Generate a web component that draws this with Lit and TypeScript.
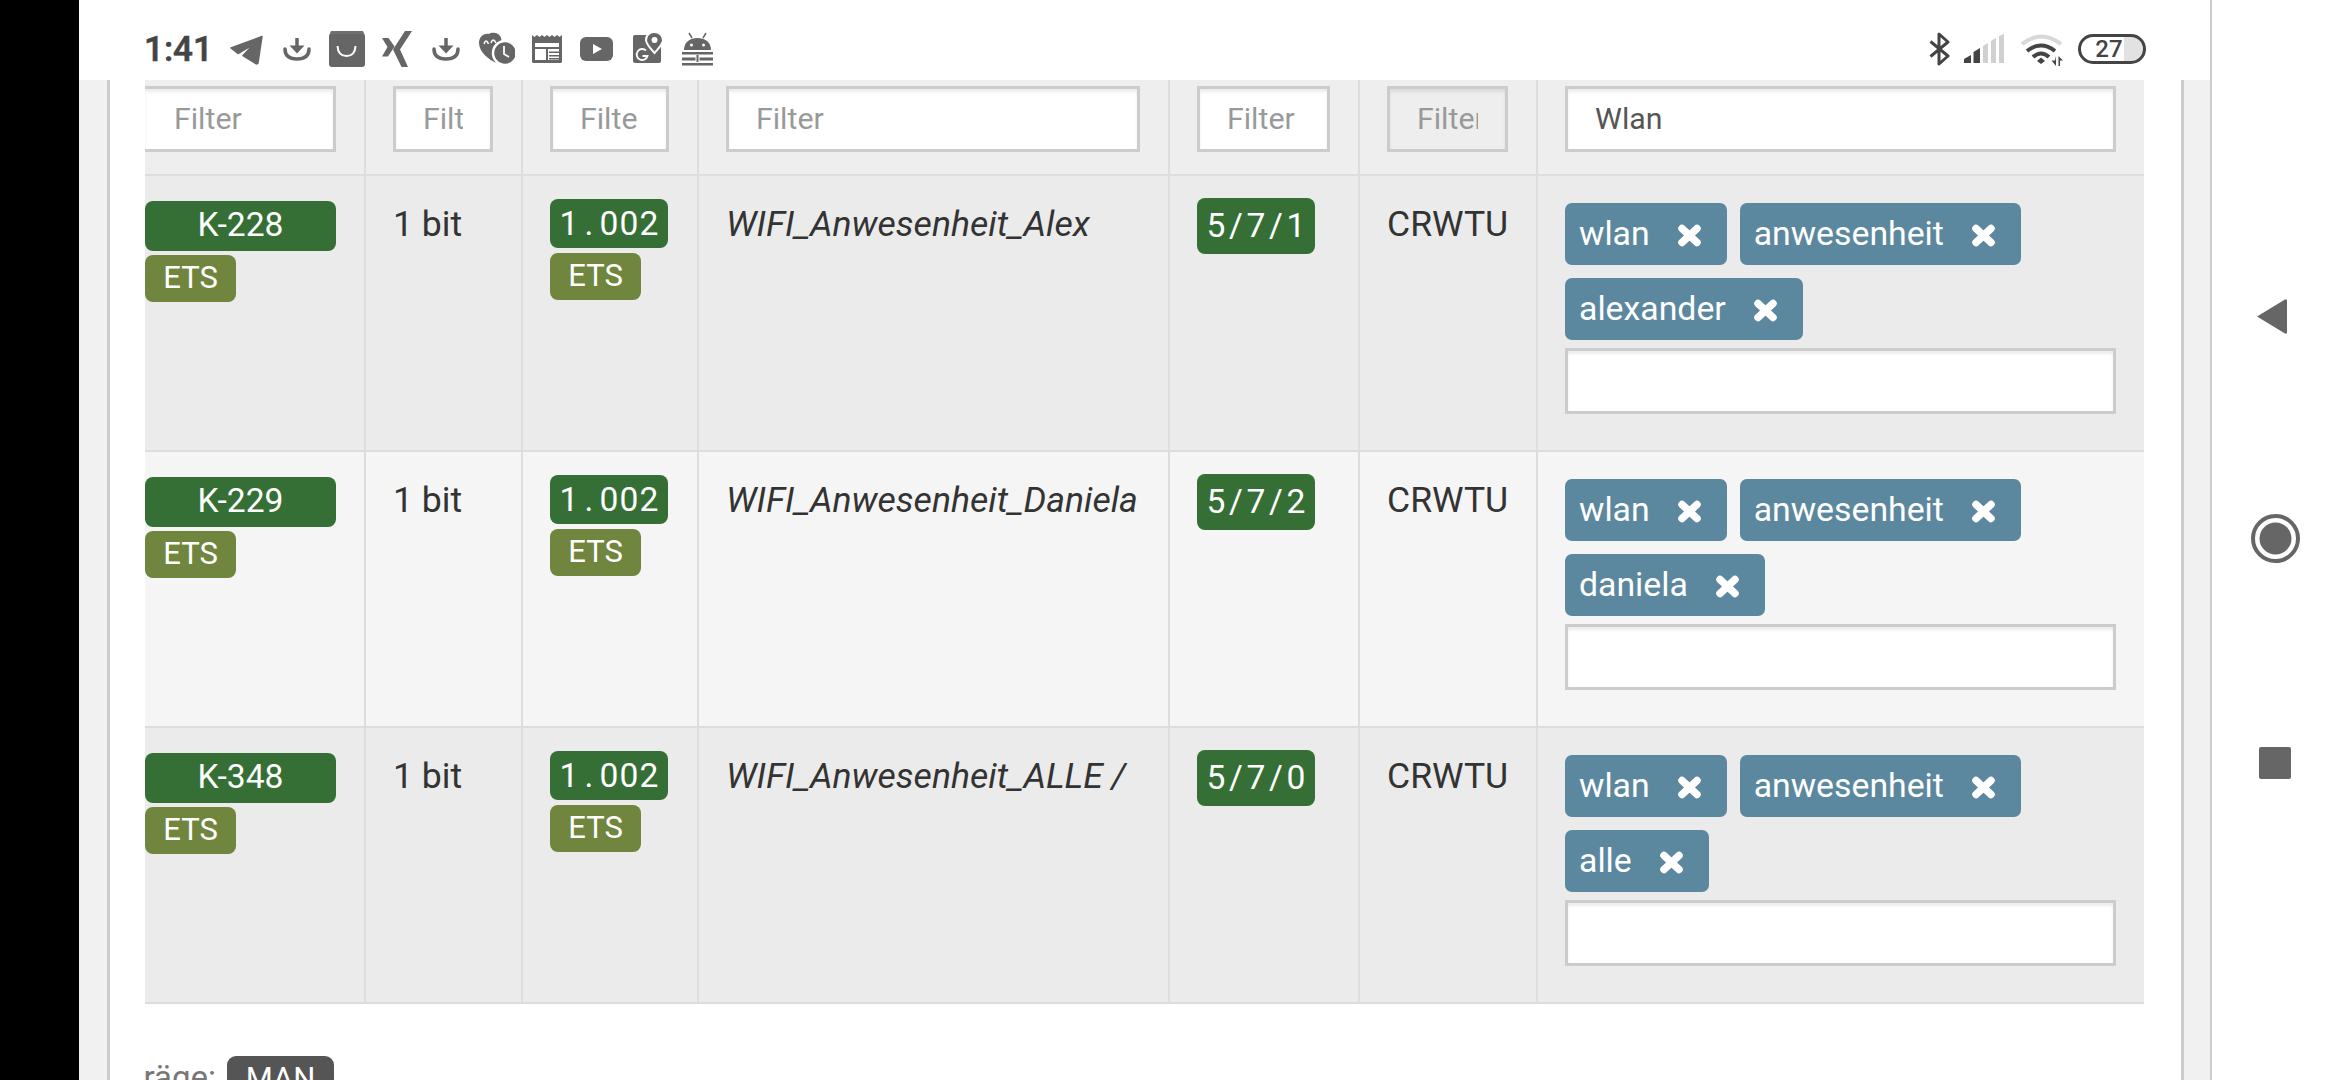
import { LitElement, html, css, svg } from "lit";
import { customElement } from "lit/decorators.js";

const G = "#666";
const leftIcons = [
  svg`<svg width="37" height="40" viewBox="227 30 37 40"><path fill="${G}" d="M231 48 262 36.500 258 63 Q257 64.500 255.500 63.500L243 55.500 254 44 238 53.500Z" stroke="${G}" stroke-width="1.500" stroke-linejoin="round"/></svg>`,
  svg`<svg width="31" height="40" viewBox="281 30 31 40"><g fill="none" stroke="${G}" stroke-width="3.500"><path d="M285 49Q285 59 297 59Q309 59 309 49" stroke-linecap="round"/><path d="M297 38V50"/></g><path fill="${G}" d="M289.500 45.500H304.500L297 53.500Z"/></svg>`,
  svg`<svg width="36" height="40" viewBox="329 30 36 40"><path fill="#707070" d="M331 31H363L365 36H329Z"/><rect x="329" y="34" width="36" height="33" rx="3" fill="${G}"/><path d="M337.500 46Q338 56 346.500 56Q355 56 355.500 46" fill="none" stroke="#fff" stroke-width="2"/></svg>`,
  svg`<svg width="30" height="40" viewBox="382 30 30 40"><path fill="${G}" d="M382 38H388.500L394.500 46.500 388 56.500H382L387.500 47ZM405 31H412L400 49.500 408 67H401.500L393 49.500Z"/></svg>`,
  svg`<svg width="32" height="40" viewBox="429 30 32 40"><g fill="none" stroke="${G}" stroke-width="3.500"><path d="M434 49Q434 59 446 59Q458 59 458 49" stroke-linecap="round"/><path d="M446 38V50"/></g><path fill="${G}" d="M438.500 45.500H453.500L446 53.500Z"/></svg>`,
  svg`<svg width="37" height="40" viewBox="478 30 37 40"><path fill="${G}" d="M497 63C489 60 479 52 479 43C479 36 485 33 489 34C491 32 498 32 500 36C503 40 501 46 498 50C496 54 496 59 497 63Z"/><path d="M484 44Q486 38 488.500 44M491 43Q493 37 496 43" fill="none" stroke="#fff" stroke-width="1.500"/><circle cx="505" cy="53" r="12" fill="${G}" stroke="#fff" stroke-width="2.500"/><path d="M504 46V54L509 57" fill="none" stroke="#fff" stroke-width="1.800"/></svg>`,
  svg`<svg width="30" height="40" viewBox="532 30 30 40"><path fill="${G}" d="M532 35l2.500 2 2.500-2 2.500 2 2.500-2 2.500 2 2.500-2 2.500 2 2.500-2 2.500 2 2.500-2 2.500 2 2.500-2V61.500q0 1.500-1.500 1.500h-27q-1.500 0-1.500-1.500Z"/><rect x="535" y="43" width="24" height="17" fill="#fff"/><path fill="${G}" d="M535 47h24v2H535ZM546 49h2v11h-2ZM549 51.500h10v1.500h-10ZM549 55h10v1.500h-10ZM549 58h10v1.500h-10Z"/></svg>`,
  svg`<svg width="34" height="40" viewBox="579 30 34 40"><rect x="580" y="37" width="33" height="24" rx="6" fill="${G}"/><path fill="#fff" d="M593 44 602 49 593 54Z"/></svg>`,
  svg`<svg width="32" height="40" viewBox="630 30 32 40"><rect x="633" y="35" width="28" height="28" rx="2" fill="${G}"/><path d="M654 32C649 32 646 36 646 40C646 44 650 48 654.500 53C659 48 663 44 663 40C663 36 660 32 654 32Z" fill="${G}" stroke="#fff" stroke-width="2"/><circle cx="654.500" cy="40" r="3" fill="#fff"/><path d="M646 50.500A5.500 5.500 0 1 0 647.500 56H642.500" fill="none" stroke="#fff" stroke-width="1.800"/></svg>`,
  svg`<svg width="34" height="40" viewBox="679 30 34 40"><path fill="${G}" d="M684 50C684 42 690 38 697.500 38C705 38 711 42 711 50Z"/><path d="M689 33 692 38M706 33 703 38" stroke="${G}" stroke-width="1.500"/><circle cx="691.500" cy="45" r="1.500" fill="#fff"/><circle cx="703.500" cy="45" r="1.500" fill="#fff"/><path fill="${G}" d="M682 52H713V54.500H682ZM682 57.500H695.500V60.500H682ZM699.500 57.500H713V60.500H699.500ZM682 63H713V65.500H682ZM696.500 55H698.500V62H696.500Z"/></svg>`,
];
const btIcon = svg`<svg width="21" height="40" viewBox="1929 30 21 40"><path d="M1930.500 41.500 1948 56 1939 64V34L1948 42 1930.500 56.500" fill="none" stroke="#444" stroke-width="3" stroke-linejoin="round"/></svg>`;
const sigIcon = svg`<svg width="41" height="40" viewBox="1964 30 41 40"><path fill="#444" d="M1964 63V59L1971 55V63ZM1973.500 63V52L1980 48V63Z"/><path fill="#d0d0d0" d="M1983 63V46L1988 43V63ZM1991 63V41L1996 38V63ZM1999 63V36L2004 34V63Z"/></svg>`;
const wifiIcon = svg`<svg width="45" height="40" viewBox="2019 30 45 40"><path d="M2022 44Q2041 29 2061 44" fill="none" stroke="#d8d8d8" stroke-width="4"/><path d="M2027 51Q2041 40 2055 51M2033 57Q2041 50 2049 57" fill="none" stroke="#444" stroke-width="4"/><path fill="#444" d="M2037 61 2041 57.500 2045 61 2041 64ZM2056 56V66L2051.500 60.500H2055ZM2058.500 56V66H2060V60.500H2063Z"/></svg>`;

const rows = [
  { id: "K-228", name: "WIFI_Anwesenheit_Alex", ga: "5/7/1", tags: ["wlan", "anwesenheit", "alexander"], shade: "odd" },
  { id: "K-229", name: "WIFI_Anwesenheit_Daniela", ga: "5/7/2", tags: ["wlan", "anwesenheit", "daniela"], shade: "even" },
  { id: "K-348", name: "WIFI_Anwesenheit_ALLE /", ga: "5/7/0", tags: ["wlan", "anwesenheit", "alle"], shade: "odd" },
];

const mono = (s: string) => [...s].map((c) => html`<span class="ch">${c}</span>`);

@customElement("app-root")
export class AppRoot extends LitElement {
  static styles = css`
    :host { display: block; width: 2340px; height: 1080px; overflow: hidden; font-family: Roboto, "Noto Sans", sans-serif; color: #333; background: #fff; }
    * { box-sizing: border-box; }
    .device { display: flex; height: 1080px; }
    .black { width: 79px; flex: none; background: #000; }
    .screen { width: 2131px; flex: none; display: flex; flex-direction: column; background: #f1f1f1; }
    .status { height: 80px; flex: none; background: #fff; display: flex; justify-content: space-between; padding: 30px 64px 0 65px; }
    .left, .right { display: flex; height: 40px; gap: 17px; }
    .right { gap: 14px; }
    .time { width: 66px; font-size: 35px; font-weight: 500; -webkit-text-stroke: 0.6px #444; color: #444; line-height: 40px; white-space: nowrap; }
    svg { display: block; flex: none; }
    .batt { width: 68px; height: 30px; margin-top: 4px; border: 3px solid #444; border-radius: 15px; overflow: hidden; display: flex; justify-content: center; padding-right: 6px; font-size: 24px; font-weight: 500; line-height: 24px; color: #444; background: linear-gradient(to right, transparent 43px, #e2e2e2 43px); }
    .card { flex: 1; margin: 0 26px 0 28px; background: #fff; border-left: 3px solid #ccc; border-right: 3px solid #ccc; padding: 0 37px 0 35px; overflow: hidden; }
    .row { display: grid; grid-template-columns: 219px 157px 176px 471px 190px 178px 609px; border-bottom: 2px solid #ddd; height: 276px; font-size: 35.6px; line-height: 52px; }
    .row.head { height: 96px; background: #eee; }
    .row.odd { background: #ebebeb; }
    .row.even { background: #f5f5f5; }
    .cell { min-width: 0; padding: 22px 28px 0 27px; border-left: 2px solid #ddd; overflow: hidden; }
    .cell:first-child { border-left: 0; padding-left: 0; }
    .cell:last-child { padding-right: 29px; }
    .head .cell { padding-top: 6px; }
    input { display: block; width: 100%; height: 66px; border: 3px solid #ccc; background: #fff; padding: 0 27px 2px; font: 400 30.3px Roboto, sans-serif; color: #555; box-shadow: inset 0 3px 3px rgba(0,0,0,.075); outline: none; border-radius: 0; }
    input::placeholder { color: #999; opacity: 1; }
    input:disabled { background: #eee; }
    .cell:first-child input { margin-left: -3px; width: calc(100% + 3px); padding-left: 29px; }
    .badge { display: block; color: #fff; border-radius: 8px; text-align: center; white-space: nowrap; font-size: 33.6px; }
    .green { background: #366f35; }
    .id { width: 191px; height: 50px; line-height: 48px; margin-top: 3px; }
    .ets { width: 91px; height: 47px; line-height: 46px; font-size: 31px; background: #70853e; margin-top: 4px; }
    .dpt { width: 118px; height: 49px; line-height: 49px; margin-top: 1px; }
    .dpt + .ets { margin-top: 5px; }
    .ga { width: 118px; height: 56px; line-height: 56px; }
    .ch { display: inline-block; width: 20px; text-align: center; }
    .text, .name { white-space: nowrap; }
    .name { font-style: italic; }
    .tags { display: flex; flex-wrap: wrap; gap: 13px; margin-top: 5px; }
    .tag { height: 62px; display: flex; align-items: center; gap: 27px; padding: 0 25px 0 14px; background: #5b889e; color: #fff; border-radius: 7px; font-size: 33.8px; }
    .tag svg { margin-top: 2px; }
    .tagin { margin-top: 8px; }
    .foot { display: flex; align-items: baseline; margin-top: 52px; font-size: 33px; }
    .clip { width: 71px; overflow: hidden; display: flex; justify-content: flex-end; color: #777; }
    .clip span { flex: none; }
    .man { margin-left: 11px; width: 107px; height: 70px; background: #555; border-radius: 9px; color: #fff; text-align: center; line-height: 46px; font-size: 31px; }
    .nav { flex: 1; border-left: 2px solid #ccc; padding: 298px 2px 0 0; display: flex; flex-direction: column; align-items: center; }
    .nav .back { margin-left: -6px; }
    .nav .home { margin-top: 179px; }
    .nav .recent { margin-top: 184px; }
  `;

  private x() {
    return svg`<svg width="25" height="23" viewBox="0 0 25 23"><path d="M5 4.500 20 18.500M20 4.500 5 18.500" stroke="#fff" stroke-width="7.500" stroke-linecap="round"/></svg>`;
  }

  render() {
    return html`<div class="device">
      <div class="black"></div>
      <div class="screen">
        <div class="status">
          <div class="left"><span class="time">1:41</span>${leftIcons}</div>
          <div class="right">${btIcon}${sigIcon}${wifiIcon}<div class="batt">27</div></div>
        </div>
        <div class="card">
          <div class="row head">
            ${["", "", "", "", "", ""].map((_, i) => html`<div class="cell"><input placeholder="Filter" ?disabled=${i === 5} /></div>`)}
            <div class="cell"><input value="Wlan" placeholder="Filter" /></div>
          </div>
          ${rows.map((r) => html`<div class="row ${r.shade}">
            <div class="cell"><span class="badge green id">${r.id}</span><span class="badge ets">ETS</span></div>
            <div class="cell"><div class="text">1 bit</div></div>
            <div class="cell"><span class="badge green dpt">${mono("1.002")}</span><span class="badge ets">ETS</span></div>
            <div class="cell"><div class="name">${r.name}</div></div>
            <div class="cell"><span class="badge green ga">${mono(r.ga)}</span></div>
            <div class="cell"><div class="text">CRWTU</div></div>
            <div class="cell">
              <div class="tags">${r.tags.map((t) => html`<span class="tag">${t}${this.x()}</span>`)}</div>
              <input class="tagin" />
            </div>
          </div>`)}
          <div class="foot"><div class="clip"><span>Einträge:</span></div><span class="man">MAN</span></div>
        </div>
      </div>
      <div class="nav">
        <svg class="back" width="32" height="37" viewBox="0 0 32 37"><path fill="${G}" d="M1 18.500 29 1.500Q31 0.500 31 3V34Q31 36.500 29 35.500Z"/></svg>
        <svg class="home" width="49" height="49" viewBox="0 0 49 49"><circle cx="24.500" cy="24.500" r="22.500" fill="none" stroke="${G}" stroke-width="4"/><circle cx="24.500" cy="24.500" r="16" fill="${G}"/></svg>
        <svg class="recent" width="32" height="32" viewBox="0 0 32 32"><rect width="32" height="32" rx="2" fill="${G}"/></svg>
      </div>
    </div>`;
  }
}
